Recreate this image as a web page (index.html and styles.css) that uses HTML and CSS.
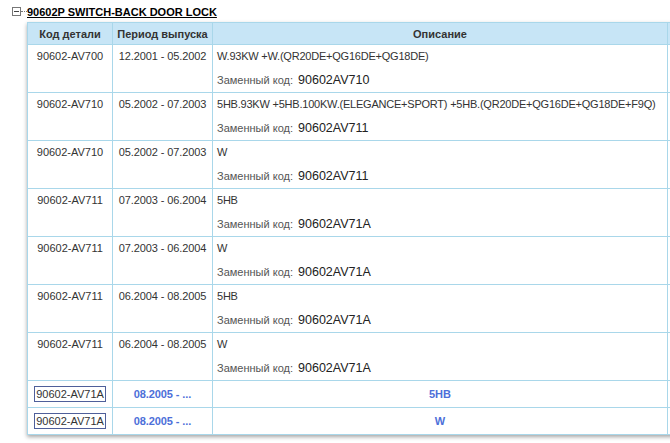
FILE: index.html
```html
<!DOCTYPE html>
<html>
<head>
<meta charset="utf-8">
<link rel="stylesheet" href="styles.css">
</head>
<body>
<div class="group">
  <div class="title"><span class="toggle"></span><span class="dots"></span><a class="name">90602P SWITCH-BACK DOOR LOCK</a></div>
  <div class="tablewrap">
  <table class="parts">
    <thead>
      <tr><th class="c1">Код детали</th><th class="c2">Период выпуска</th><th class="c3">Описание</th><th class="c4"></th></tr>
    </thead>
    <tbody>
      <tr><td>90602-AV700</td><td>12.2001 - 05.2002</td><td><div class="d1">W.93KW +W.(QR20DE+QG16DE+QG18DE)</div><div class="d2">Заменный код: <span class="rc">90602AV710</span></div></td><td></td></tr>
      <tr><td>90602-AV710</td><td>05.2002 - 07.2003</td><td><div class="d1">5HB.93KW +5HB.100KW.(ELEGANCE+SPORT) +5HB.(QR20DE+QG16DE+QG18DE+F9Q)</div><div class="d2">Заменный код: <span class="rc">90602AV711</span></div></td><td></td></tr>
      <tr><td>90602-AV710</td><td>05.2002 - 07.2003</td><td><div class="d1">W</div><div class="d2">Заменный код: <span class="rc">90602AV711</span></div></td><td></td></tr>
      <tr><td>90602-AV711</td><td>07.2003 - 06.2004</td><td><div class="d1">5HB</div><div class="d2">Заменный код: <span class="rc">90602AV71A</span></div></td><td></td></tr>
      <tr><td>90602-AV711</td><td>07.2003 - 06.2004</td><td><div class="d1">W</div><div class="d2">Заменный код: <span class="rc">90602AV71A</span></div></td><td></td></tr>
      <tr><td>90602-AV711</td><td>06.2004 - 08.2005</td><td><div class="d1">5HB</div><div class="d2">Заменный код: <span class="rc">90602AV71A</span></div></td><td></td></tr>
      <tr><td>90602-AV711</td><td>06.2004 - 08.2005</td><td><div class="d1">W</div><div class="d2">Заменный код: <span class="rc">90602AV71A</span></div></td><td></td></tr>
      <tr class="cur"><td><span class="box">90602-AV71A</span></td><td class="hl">08.2005 - ...</td><td class="hl">5HB</td><td></td></tr>
      <tr class="cur"><td><span class="box">90602-AV71A</span></td><td class="hl">08.2005 - ...</td><td class="hl">W</td><td></td></tr>
    </tbody>
  </table>
  </div>
</div>
<div class="group">
  <div class="title"><span class="toggle"></span><span class="dots"></span><a class="name">90602B-3WE</a></div>
</div>
</body>
</html>
```
FILE: styles.css
```css
html { overflow: hidden; }
body {
  margin: 0;
  padding: 4px 0 0 12px;
  font-family: "Liberation Sans", Arial, sans-serif;
  color: #333;
  background: #fff;
}
.group { margin-bottom: 6px; }
.title {
  display: flex;
  align-items: center;
  height: 15px;
}
.toggle {
  width: 7px;
  height: 7px;
  border: 1px solid #777;
  position: relative;
  flex: none;
}
.toggle::after {
  content: "";
  position: absolute;
  left: 1px;
  top: 3px;
  width: 5px;
  height: 1px;
  background: #444;
}
.dots {
  width: 6px;
  border-top: 1px dotted #777;
  flex: none;
}
.name {
  font-size: 11px;
  font-weight: bold;
  color: #000;
  text-decoration: underline;
}
.tablewrap {
  margin: 3px 0 0 15px;
  width: 720px;
  box-shadow: 0 2px 4px rgba(0,0,0,0.35);
}
.parts {
  border-collapse: collapse;
  width: 720px;
  table-layout: fixed;
  font-size: 11px;
}
.parts th, .parts td {
  border: 1px solid #a9d7ea;
  white-space: nowrap;
}
.parts th {
  background: #c7e5f6;
  height: 21px;
  padding: 0;
  font-weight: bold;
  text-align: center;
  color: #333;
}
.c1 { width: 84px; }
.c2 { width: 99px; }
.c3 { width: 454px; }
.parts td {
  vertical-align: top;
  padding: 4px 4px 5px;
  line-height: 14px;
  overflow: hidden;
}
.parts td:first-child { text-align: center; }
.parts td:nth-child(2) { text-align: center; letter-spacing: -0.1px; }
.d1 { height: 14px; letter-spacing: -0.22px; }
.d2 {
  margin-top: 10px;
  height: 14px;
  color: #555;
}
.rc {
  font-size: 12.5px;
  line-height: 1;
  color: #222;
  margin-left: 2px;
}
.cur td {
  height: 17px;
  padding: 4px 4px 5px;
  vertical-align: middle;
}
.box {
  display: inline-block;
  border: 1px solid #4f5f9a;
  padding: 0 1px;
  line-height: 14px;
  color: #333;
}
.hl {
  color: #4d6fd9;
  font-weight: bold;
}
.parts td.hl { text-align: center; }
```
